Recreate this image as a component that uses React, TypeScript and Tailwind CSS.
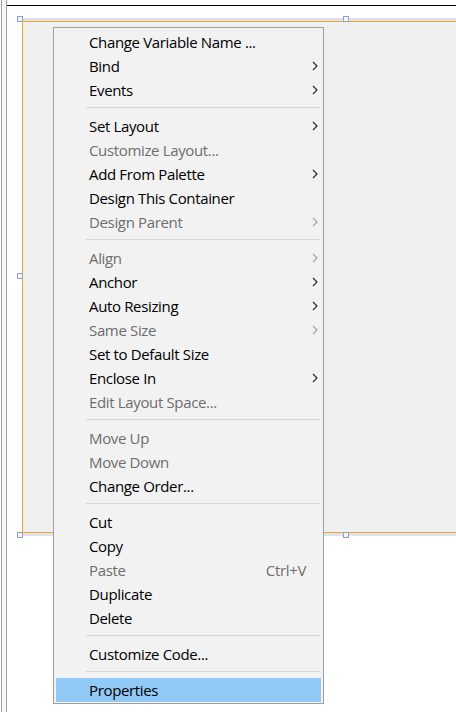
import React from 'react';

type Entry =
  | { kind: 'sep' }
  | {
      kind: 'item';
      label: string;
      disabled?: boolean;
      submenu?: boolean;
      shortcut?: string;
      active?: boolean;
    };

const entries: Entry[] = [
  { kind: 'item', label: 'Change Variable Name ...' },
  { kind: 'item', label: 'Bind', submenu: true },
  { kind: 'item', label: 'Events', submenu: true },
  { kind: 'sep' },
  { kind: 'item', label: 'Set Layout', submenu: true },
  { kind: 'item', label: 'Customize Layout...', disabled: true },
  { kind: 'item', label: 'Add From Palette', submenu: true },
  { kind: 'item', label: 'Design This Container' },
  { kind: 'item', label: 'Design Parent', submenu: true, disabled: true },
  { kind: 'sep' },
  { kind: 'item', label: 'Align', submenu: true, disabled: true },
  { kind: 'item', label: 'Anchor', submenu: true },
  { kind: 'item', label: 'Auto Resizing', submenu: true },
  { kind: 'item', label: 'Same Size', submenu: true, disabled: true },
  { kind: 'item', label: 'Set to Default Size' },
  { kind: 'item', label: 'Enclose In', submenu: true },
  { kind: 'item', label: 'Edit Layout Space...', disabled: true },
  { kind: 'sep' },
  { kind: 'item', label: 'Move Up', disabled: true },
  { kind: 'item', label: 'Move Down', disabled: true },
  { kind: 'item', label: 'Change Order...' },
  { kind: 'sep' },
  { kind: 'item', label: 'Cut' },
  { kind: 'item', label: 'Copy' },
  { kind: 'item', label: 'Paste', disabled: true, shortcut: 'Ctrl+V' },
  { kind: 'item', label: 'Duplicate' },
  { kind: 'item', label: 'Delete' },
  { kind: 'sep' },
  { kind: 'item', label: 'Customize Code...' },
  { kind: 'sep' },
  { kind: 'item', label: 'Properties', active: true },
];

const Chevron = ({ disabled }: { disabled?: boolean }) => (
  <svg width="6" height="10" viewBox="0 0 6 10" className="block">
    <polyline
      points="1,1 5,5 1,9"
      fill="none"
      stroke={disabled ? '#a6a6a6' : '#333333'}
      strokeWidth="1.3"
    />
  </svg>
);

// selection handle drawn over the canvas
const Handle = ({ className }: { className: string }) => (
  <div
    className={`absolute w-[6px] h-[6px] bg-[#f4f6fb] border border-[#8ea3c3] ${className}`}
  />
);

const ContextMenu = () => (
  <div
    className="absolute left-[53px] top-[27px] w-[271px] bg-[#f2f2f2] border border-[#a0a0a0] pt-[2px] pb-px px-[2px] text-[15px] leading-none tracking-[-0.35px]"
    style={{ fontFamily: '"Segoe UI", "Open Sans", sans-serif' }}
  >
    {entries.map((e, i) =>
      e.kind === 'sep' ? (
        <div key={i} className="h-[12px] pt-[5px] pl-[30px] pr-px">
          <div className="h-px bg-[#d7d7d7]" />
        </div>
      ) : (
        <div
          key={i}
          className={`h-[24px] flex items-center pl-[33px] pr-[3px] ${
            e.active ? 'bg-[#91c9f7]' : ''
          } ${e.disabled ? 'text-[#6d6d6d]' : 'text-black'}`}
        >
          <span className="flex-1 whitespace-nowrap">{e.label}</span>
          {e.shortcut && <span className="mr-[12px] whitespace-nowrap">{e.shortcut}</span>}
          {e.submenu && <Chevron disabled={e.disabled} />}
        </div>
      )
    )}
  </div>
);

export default function App() {
  return (
    <div className="relative w-[456px] h-[712px] bg-white overflow-hidden flex">
      {/* left editor gutter */}
      <div className="w-[7px] h-full pl-px shrink-0">
        <div className="h-full bg-[#f7f7f7] border-l border-r border-[#a0a0a0]" />
      </div>

      <div className="flex-1 flex flex-col min-w-0">
        <div className="h-[6px] border-b border-black shrink-0" />
        <div className="pl-[15px] pt-[12px]">
          <div className="w-[700px] border-t-[3px] border-b-[3px] border-[#dde1f5]">
            <div className="h-[512px] bg-[#f0f0f0] border-t border-l border-b border-[#f4a61b]" />
          </div>
        </div>
      </div>

      <Handle className="left-[17px] top-[16px]" />
      <Handle className="left-[343px] top-[16px]" />
      <Handle className="left-[17px] top-[273px]" />
      <Handle className="left-[17px] top-[532px]" />
      <Handle className="left-[343px] top-[532px]" />

      <ContextMenu />
    </div>
  );
}
